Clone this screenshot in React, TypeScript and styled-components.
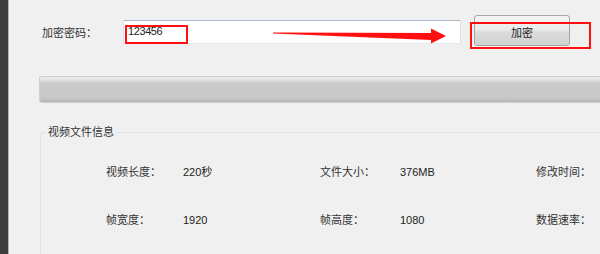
import { createGlobalStyle, styled } from "styled-components";

const GlobalStyle = createGlobalStyle`
  html, body {
    margin: 0;
    padding: 0;
    background: #f0f0f0;
  }
  body {
    font-family: "Liberation Sans", "Noto Sans CJK SC", sans-serif;
    font-size: 11px;
    color: #333;
  }
`;

const Window = styled.div`
  position: relative;
  width: 600px;
  height: 254px;
  overflow: hidden;
  display: flex;
  background: #f0f0f0;
`;

const SideStrip = styled.div`
  width: 8px;
  flex: none;
  background: #3d3d3d;
  border-right: 1px solid #b4b4b4;
`;

const Main = styled.div`
  flex: 1;
  display: flex;
  flex-direction: column;
  padding-left: 30px;
  margin-right: -20px;
  & > * {
    flex: none;
  }
`;

const KeyRow = styled.div`
  display: flex;
  align-items: flex-start;
  padding: 15px 0 0 3px;
  height: 32px;
`;

const Label = styled.span`
  width: 81px;
  line-height: 16px;
  margin-top: 10px;
  color: #333;
`;

const KeyInput = styled.div`
  width: 332px;
  height: 22px;
  margin-top: 5px;
  background: #fff;
  border: 1px solid;
  border-color: #abb9c6 #dbe3ea #e3e9ef #dbe3ea;
  padding-left: 4px;
  line-height: 21px;
  color: #222;
  letter-spacing: -0.4px;
`;

const Button = styled.div`
  width: 94px;
  height: 26px;
  margin-left: 13px;
  border: 1px solid #a6a6a6;
  border-radius: 3px;
  background: linear-gradient(#f4f4f4 0%, #ececec 45%, #dcdcdc 55%, #d2d2d2 100%);
  display: flex;
  align-items: center;
  justify-content: center;
  padding-top: 3px;
  color: #222;
`;

const Highlight = styled.div<{ $top: number; $left: number; $w: number; $h: number }>`
  position: absolute;
  top: ${(p) => p.$top}px;
  left: ${(p) => p.$left}px;
  width: ${(p) => p.$w}px;
  height: ${(p) => p.$h}px;
  border: 2px solid #ff1010;
  box-sizing: border-box;
  pointer-events: none;
`;

const Arrow = styled.svg`
  position: absolute;
  left: 0;
  top: 0;
  pointer-events: none;
`;

const Progress = styled.div`
  margin-top: 29px;
  height: 25px;
  border: 1px solid #cfcfcf;
  border-right: none;
  border-radius: 3px 0 0 3px;
  background: linear-gradient(
    #ececec 0px,
    #e2e2e2 3px,
    #cacaca 6px,
    #c8c8c8 21px,
    #b3b3b3 25px
  );
`;

const InfoGroup = styled.fieldset`
  margin: 21px 0 0 1px;
  padding: 24px 0 40px 5px;
  border: 1px solid #dce3e9;
  border-radius: 3px;
  min-width: 0;
`;

const Legend = styled.legend`
  padding: 0 2px;
  line-height: 16px;
  color: #333;
`;

const InfoGrid = styled.div`
  display: grid;
  grid-template-columns: 77px 137px 80px 136px auto;
  row-gap: 32px;
  margin-left: 60px;
  line-height: 16px;
`;

const Cell = styled.span<{ $value?: boolean }>`
  color: ${(p) => (p.$value ? "#222" : "#333")};
  white-space: nowrap;
`;

const info = [
  ["视频长度：", "220秒", "文件大小：", "376MB", "修改时间："],
  ["帧宽度：", "1920", "帧高度：", "1080", "数据速率："],
];

export default function App() {
  return (
    <>
      <GlobalStyle />
      <Window>
        <SideStrip />
        <Main>
          <KeyRow>
            <Label>加密密码：</Label>
            <KeyInput>123456</KeyInput>
            <Button>加密</Button>
          </KeyRow>
          <Progress />
          <InfoGroup>
            <Legend>视频文件信息</Legend>
            <InfoGrid>
              {info.map((row) =>
                row.map((text, i) => (
                  <Cell key={text} $value={i === 1 || i === 3}>
                    {text}
                  </Cell>
                ))
              )}
            </InfoGrid>
          </InfoGroup>
        </Main>
        <Highlight $top={25} $left={125} $w={63} $h={19} />
        <Highlight $top={22} $left={470} $w={121} $h={27} />
        <Arrow width="600" height="254" viewBox="0 0 600 254">
          <polygon
            points="273,32.6 431,33 431,28.5 446,36 431,43.5 431,40 273,33.6"
            fill="#ff1010"
          />
        </Arrow>
      </Window>
    </>
  );
}
